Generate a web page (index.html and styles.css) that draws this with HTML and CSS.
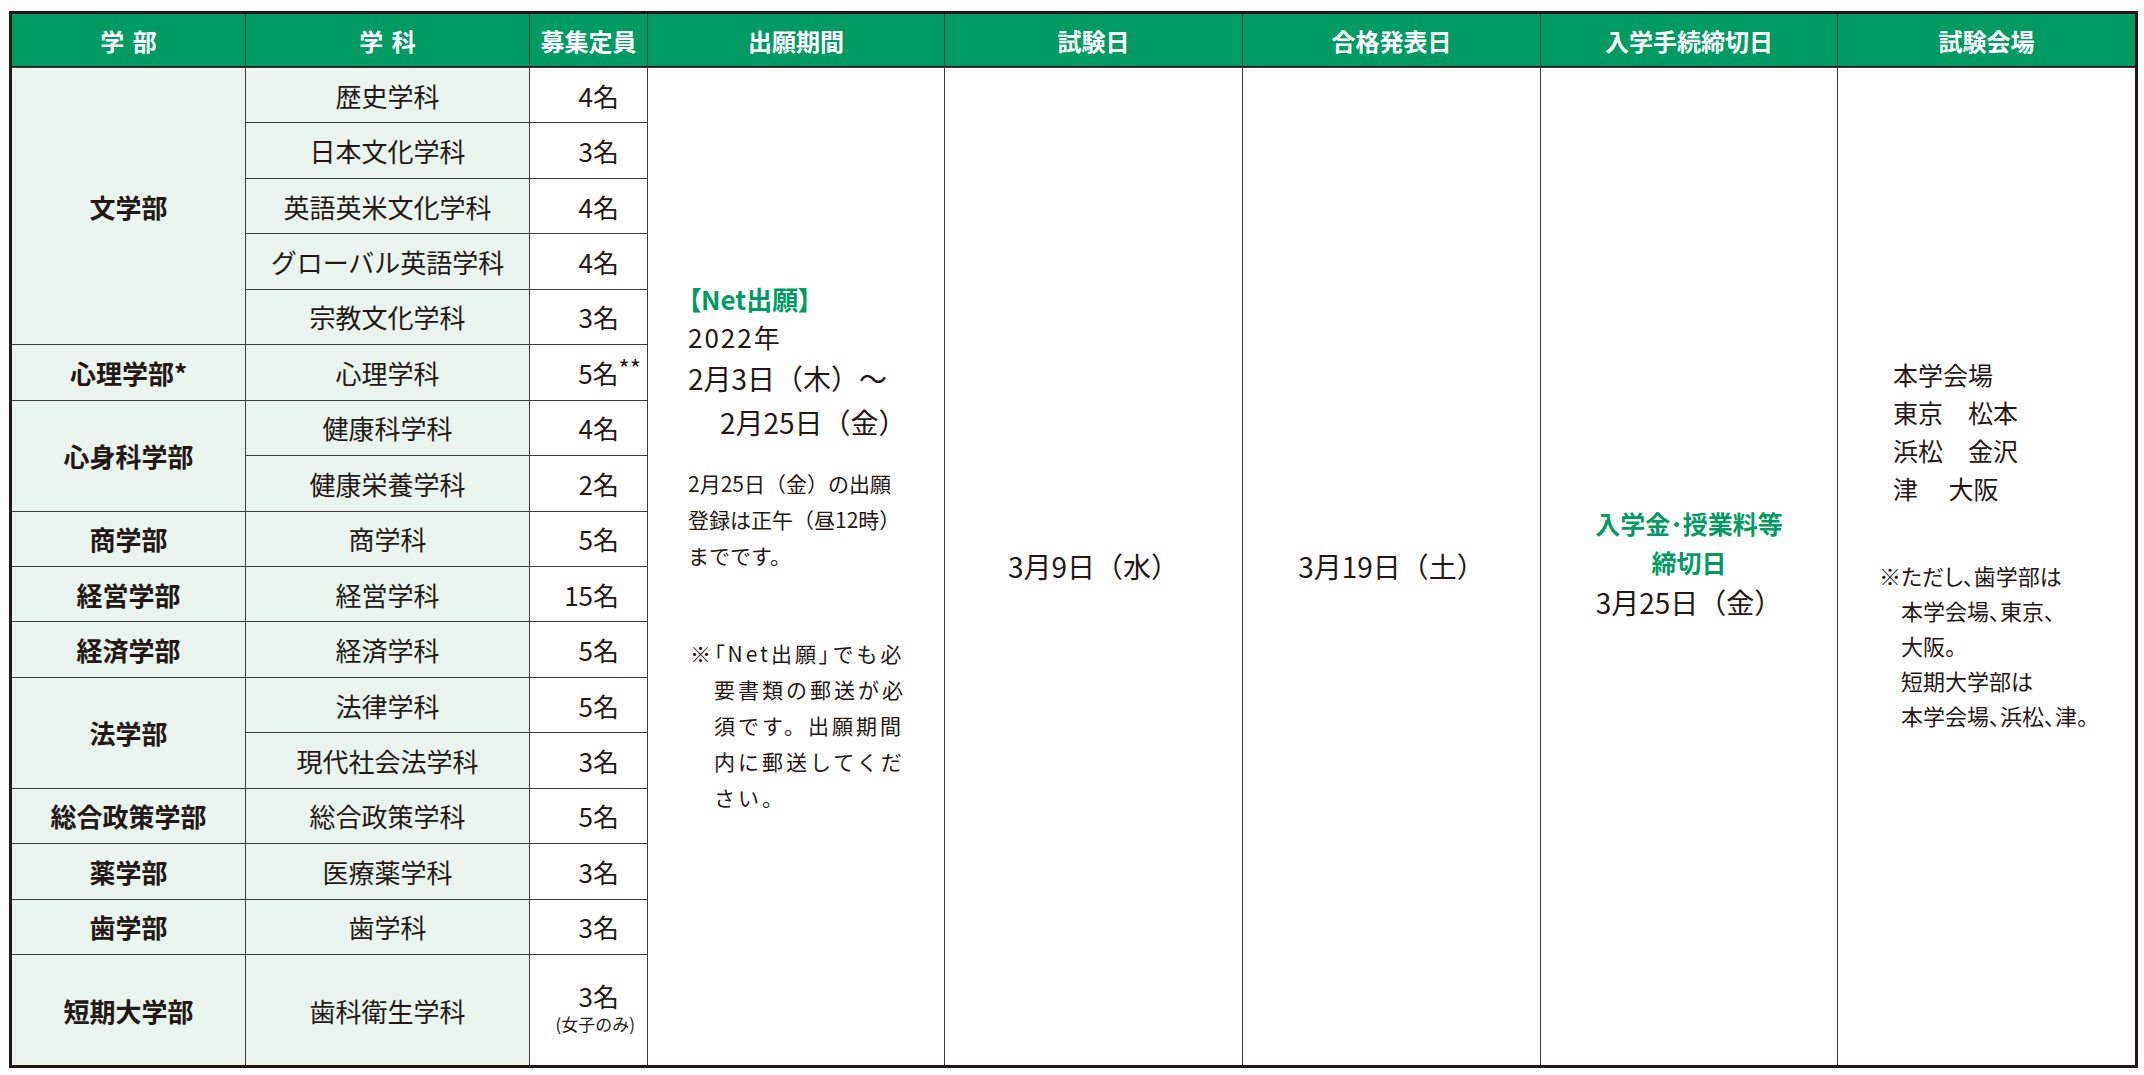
FILE: index.html
```html
<!DOCTYPE html>
<html lang="ja">
<head>
<meta charset="utf-8">
<title>入試日程</title>
<link rel="stylesheet" href="styles.css">
</head>
<body>
<div class="sheet">
  <div class="h">学&nbsp;部</div>
  <div class="h">学&nbsp;科</div>
  <div class="h">募集定員</div>
  <div class="h">出願期間</div>
  <div class="h">試験日</div>
  <div class="h">合格発表日</div>
  <div class="h">入学手続締切日</div>
  <div class="h">試験会場</div>

  <div class="app">
    <div class="net">【Net出願】</div>
    <div class="year">2022年</div>
    <div class="d1">2月3日（木）～</div>
    <div class="d2">2月25日（金）</div>
    <div class="note1">2月25日（金）の出願<br>登録は正午（昼12時）<br>までです。</div>
    <div class="note2">※<span class="palt">「Net出願」</span>でも必<br>要書類の郵送が必<br>須です。出願期間<br>内に郵送してくだ<br>さい。</div>
  </div>
  <div class="exam">3月9日（水）</div>
  <div class="pass">3月19日（土）</div>
  <div class="fee">
    <div class="fee-label">入学金･授業料等</div>
    <div class="fee-label">締切日</div>
    <div class="fee-date">3月25日（金）</div>
  </div>
  <div class="venue">
    <div class="vlist">本学会場<br>東京　松本<br>浜松　金沢<br>津　 大阪</div>
    <div class="vnote">※ただし、歯学部は<br>本学会場、東京、<br>大阪。<br>短期大学部は<br>本学会場、浜松、津。</div>
  </div>

  <div class="fac r5">文学部</div>
  <div class="dept">歴史学科</div><div class="cap">4名</div>
  <div class="dept">日本文化学科</div><div class="cap">3名</div>
  <div class="dept">英語英米文化学科</div><div class="cap">4名</div>
  <div class="dept">グローバル英語学科</div><div class="cap">4名</div>
  <div class="dept">宗教文化学科</div><div class="cap">3名</div>

  <div class="fac">心理学部*</div>
  <div class="dept">心理学科</div><div class="cap">5名<span class="ast">**</span></div>

  <div class="fac r2">心身科学部</div>
  <div class="dept">健康科学科</div><div class="cap">4名</div>
  <div class="dept">健康栄養学科</div><div class="cap">2名</div>

  <div class="fac">商学部</div>
  <div class="dept">商学科</div><div class="cap">5名</div>

  <div class="fac">経営学部</div>
  <div class="dept">経営学科</div><div class="cap">15名</div>

  <div class="fac">経済学部</div>
  <div class="dept">経済学科</div><div class="cap">5名</div>

  <div class="fac r2">法学部</div>
  <div class="dept">法律学科</div><div class="cap">5名</div>
  <div class="dept">現代社会法学科</div><div class="cap">3名</div>

  <div class="fac">総合政策学部</div>
  <div class="dept">総合政策学科</div><div class="cap">5名</div>

  <div class="fac">薬学部</div>
  <div class="dept">医療薬学科</div><div class="cap">3名</div>

  <div class="fac">歯学部</div>
  <div class="dept">歯学科</div><div class="cap">3名</div>

  <div class="fac r2">短期大学部</div>
  <div class="dept r2">歯科衛生学科</div>
  <div class="cap r2 capstack"><span class="cap-main">3名</span><span class="cap-sub">(女子のみ)</span></div>
</div>
</body>
</html>
```

FILE: styles.css
```css
html, body {
  margin: 0;
  padding: 0;
  background: #ffffff;
}

body {
  font-family: "Noto Sans CJK JP", "Noto Sans", sans-serif;
  color: #231815;
}

.sheet {
  margin: 11px 0 0 9px;
  width: 2129px;
  height: 1057px;
  box-sizing: border-box;
  border: 3px solid #231815;
  display: grid;
  grid-template-columns: 233px 283px 117px 296px 297px 297px 296px 297px;
  grid-template-rows: 53px repeat(18, 1fr);
  gap: 1px;
  background: #3d3a3a;
}

.h {
  grid-row: 1;
  background: #009b63;
  color: #ffffff;
  font-weight: 700;
  font-size: 24px;
  word-spacing: 3px;
  display: flex;
  align-items: center;
  justify-content: center;
  border-bottom: 1px solid #231815;
}

.fac,
.dept {
  background: #e9f4ee;
  font-size: 26px;
  display: flex;
  align-items: center;
  justify-content: center;
  white-space: nowrap;
}

.fac {
  grid-column: 1;
  font-weight: 700;
}

.dept {
  grid-column: 2;
}

.cap {
  grid-column: 3;
  background: #ffffff;
  font-size: 26px;
  display: flex;
  align-items: center;
  justify-content: flex-end;
  padding-right: 28px;
  white-space: nowrap;
}

.r2 { grid-row: span 2; }
.r5 { grid-row: span 5; }

.ast {
  margin-right: -22px;
  font-size: 24px;
  align-self: flex-start;
  margin-top: 11px;
  line-height: 24px;
}

.capstack {
  flex-direction: column;
  justify-content: center;
  align-items: flex-end;
}

.cap-main {
  line-height: 28px;
}

.cap-sub {
  font-size: 17px;
  line-height: 28px;
  margin-right: -16px;
}

/* right-hand tall columns */
.app,
.exam,
.pass,
.fee,
.venue {
  grid-row: 2 / span 18;
  background: #ffffff;
  white-space: nowrap;
}

.app {
  grid-column: 4;
  padding: 212px 0 0 40px;
}

.net {
  color: #009b63;
  font-weight: 700;
  font-size: 26px;
  line-height: 38px;
  font-feature-settings: "palt";
}

.year {
  font-size: 26px;
  line-height: 38px;
  letter-spacing: 2px;
}

.d1,
.d2 {
  font-size: 28px;
  line-height: 44px;
}

.d2 {
  padding-left: 32px;
}

.note1 {
  margin-top: 21px;
  font-size: 21px;
  line-height: 36px;
}

.note2 {
  margin-top: 62px;
  font-size: 21px;
  line-height: 36px;
  letter-spacing: 3px;
  padding-left: 26px;
  text-indent: -24px;
}

.palt {
  font-feature-settings: "palt";
}

.exam,
.pass {
  display: flex;
  align-items: center;
  justify-content: center;
  font-size: 28px;
}

.exam { grid-column: 5; }
.pass { grid-column: 6; }

.fee {
  grid-column: 7;
  display: flex;
  flex-direction: column;
  align-items: center;
  justify-content: center;
  padding-bottom: 7px;
}

.fee-label {
  color: #009b63;
  font-weight: 700;
  font-size: 25px;
  line-height: 39px;
}

.fee-date {
  font-size: 28px;
  line-height: 40px;
}

.venue {
  grid-column: 8;
  padding-top: 287px;
}

.vlist {
  padding-left: 55px;
  font-size: 25px;
  line-height: 38px;
}

.vnote {
  margin-top: 51px;
  padding-left: 63px;
  text-indent: -22px;
  font-size: 22px;
  line-height: 35px;
  font-feature-settings: "palt";
}
```
